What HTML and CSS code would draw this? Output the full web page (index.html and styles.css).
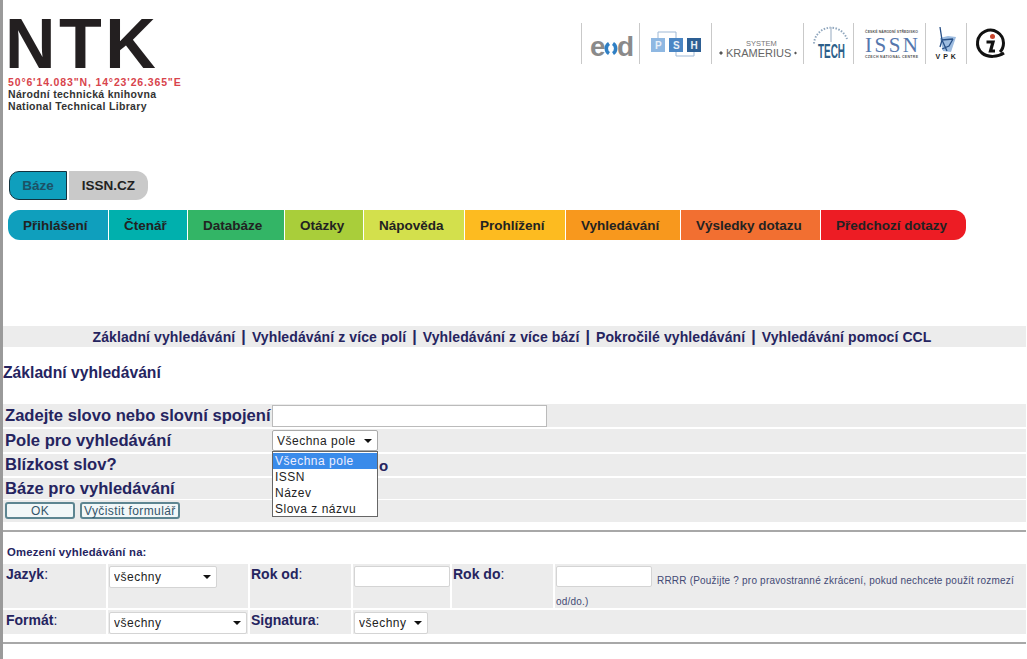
FILE: index.html
```html
<!DOCTYPE html>
<html lang="cs">
<head>
<meta charset="utf-8">
<title>Základní vyhledávání</title>
<link rel="stylesheet" href="styles.css">
</head>
<body>
<header class="top">
  <div class="brand">
    <div class="ntk">NTK</div>
    <div class="coords">50°6'14.083"N, 14°23'26.365"E</div>
    <div class="lib">Národní technická knihovna</div>
    <div class="lib">National Technical Library</div>
  </div>
  <div class="logos">
    <div class="logo w58">
      <svg width="44" height="28" viewBox="0 0 44 28"><text class="eod" x="1" y="26">e</text><path d="M20 23.500A6 6 0 0 1 20 13.500" fill="none" stroke="#2f7fc4" stroke-width="3.500"/><path d="M24 13.500A6 6 0 0 1 24 23.500" fill="none" stroke="#2f7fc4" stroke-width="3.500"/><text class="eod" x="28" y="26">d</text></svg>
    </div>
    <div class="logo w72">
      <svg width="50" height="26" viewBox="0 0 50 26"><path d="M7 7V1H25V7M25 21V25H43V21" fill="none" stroke="#9fb9d6"/><rect x="0" y="7" width="14" height="14" fill="#8fb8e2"/><rect x="18" y="7" width="14" height="14" fill="#4b86c4"/><rect x="36" y="7" width="14" height="14" fill="#2d5f94"/><text class="psh" x="4" y="18">P</text><text class="psh" x="22" y="18">S</text><text class="psh" x="39.500" y="18">H</text></svg>
    </div>
    <div class="logo w92">
      <svg width="80" height="28" viewBox="0 0 80 28"><text class="kr1" x="28" y="16">SYSTEM</text><text class="kr2" x="8" y="27">KRAMERIUS</text><path d="M1 23l2-2 2 2-2 2zM76 23l1.500-1.500 1.500 1.500-1.500 1.500z" fill="#555"/></svg>
    </div>
    <div class="logo w50">
      <svg width="36" height="38" viewBox="0 0 36 38"><path d="M3 18.500A17 17 0 0 1 36 14" fill="none" stroke="#8fa6bd" stroke-width="2" stroke-dasharray="1.500 1.500"/><path d="M20 2V17" stroke="#b8c6d4" stroke-width="1.500"/><text class="tech" x="7" y="32.500" textLength="27" lengthAdjust="spacingAndGlyphs">TECH</text></svg>
    </div>
    <div class="logo w72">
      <svg width="56" height="31" viewBox="0 0 56 31"><text class="tiny" x="3" y="5" textLength="53">ČESKÉ NÁRODNÍ STŘEDISKO</text><text class="issn" x="3" y="23.500">ISSN</text><text class="tiny" x="3" y="30" textLength="53">CZECH NATIONAL CENTRE</text></svg>
    </div>
    <div class="logo w41">
      <svg width="24" height="34" viewBox="0 0 24 34"><path d="M6 11L9 24 17 25 22 10 14 9Z" fill="#9dbce0"/><path d="M6 0L8 13 19 12M8 13L13 24M8 13L6 20M19 12L15 19 8 22" fill="none" stroke="#274f86" stroke-width="1.300"/><text class="vpk" x="1.500" y="31.500">VPK</text></svg>
    </div>
    <div class="logo w-last">
      <svg width="30" height="30" viewBox="0 0 30 30"><path d="M30 24C24 28 14 29 8 24A13 13 0 1 1 29.500 14C29.500 18 28 21 26 23" fill="none" stroke="#111" stroke-width="3"/><circle cx="18.500" cy="7.500" r="2.500" fill="#c8442c"/><path d="M12.500 13H19L16.500 22H21" fill="none" stroke="#111" stroke-width="3.200"/></svg>
    </div>
  </div>
</header>

<nav class="tabs">
  <a class="tab tab-on">Báze</a><a class="tab tab-off">ISSN.CZ</a>
</nav>

<nav class="menu">
  <a class="c1">Přihlášení</a>
  <a class="c2">Čtenář</a>
  <a class="c3">Databáze</a>
  <a class="c4">Otázky</a>
  <a class="c5">Nápověda</a>
  <a class="c6">Prohlížení</a>
  <a class="c7">Vyhledávání</a>
  <a class="c8">Výsledky dotazu</a>
  <a class="c9">Předchozí dotazy</a>
</nav>

<div class="sub">
  <a>Základní vyhledávání</a> <b>|</b> <a>Vyhledávání z více polí</a> <b>|</b> <a>Vyhledávání z více bází</a> <b>|</b> <a>Pokročilé vyhledávání</a> <b>|</b> <a>Vyhledávání pomocí CCL</a>
</div>

<h1 class="title">Základní vyhledávání</h1>

<form class="form">
  <div class="row row1"><label>Zadejte slovo nebo slovní spojení</label><input class="term" type="text"></div>
  <div class="row row2">
    <label>Pole pro vyhledávání</label>
    <span class="sel sel-field"><select><option>Všechna pole</option></select></span>
    <ul class="drop">
      <li class="hit">Všechna pole</li>
      <li>ISSN</li>
      <li>Název</li>
      <li>Slova z názvu</li>
    </ul>
  </div>
  <div class="row row3"><label>Blízkost slov?</label><span class="peek">o</span></div>
  <div class="row row4"><label>Báze pro vyhledávání</label></div>
  <div class="row row5"><button class="btn ok" type="button">OK</button><button class="btn" type="button">Vyčistit formulář</button></div>
</form>

<hr class="rule rule1">

<div class="limit-title">Omezení vyhledávání na:</div>
<div class="limits">
  <div class="cell tall first"><span class="lbl"><b>Jazyk</b>:</span></div>
  <div class="cell tall"><span class="sel sel-a"><select><option>všechny</option></select></span></div>
  <div class="cell tall"><span class="lbl"><b>Rok od</b>:</span></div>
  <div class="cell tall"><input class="year" type="text"></div>
  <div class="cell tall"><span class="lbl"><b>Rok do</b>:</span></div>
  <div class="cell tall note"><input class="year" type="text"><span class="hint">RRRR (Použijte ? pro pravostranné zkrácení, pokud nechcete použít rozmezí od/do.)</span></div>
  <div class="cell first"><span class="lbl"><b>Formát</b>:</span></div>
  <div class="cell"><span class="sel sel-b"><select><option>všechny</option></select></span></div>
  <div class="cell"><span class="lbl"><b>Signatura</b>:</span></div>
  <div class="cell rest"><span class="sel sel-c"><select><option>všechny</option></select></span></div>
</div>

<hr class="rule rule2">
</body>
</html>
```

FILE: styles.css
```css
* { box-sizing: border-box; }
html, body { height: 100%; }
body {
  margin: 0;
  padding-right: 1px;
  border-left: 3px solid #9a9a9a;
  background: #fff;
  color: #25245f;
  font-family: "Liberation Sans", Arial, sans-serif;
  overflow: hidden;
}

/* header */
.top { display: flex; justify-content: space-between; height: 171px; }
.brand { padding: 5px 0 0 5px; }
.ntk {
  height: 69px;
  padding-top: 9px;
  font-size: 70px;
  line-height: 60px;
  font-weight: 700;
  letter-spacing: 3.500px;
  color: #231f20;
  margin-left: -3px;
}
.coords { margin-top: 2px; font-size: 10.500px; line-height: 12px; font-weight: 700; letter-spacing: .85px; color: #d8444c; }
.lib { font-size: 10.500px; line-height: 12px; font-weight: 700; letter-spacing: .32px; color: #333; }
.logos { display: flex; align-items: stretch; height: 41px; margin-top: 23px; margin-right: 15px; }
.logo { display: flex; align-items: center; justify-content: center; border-left: 1px solid #c9c9c9; }
.logo svg { overflow: visible; }
.w58 { width: 58px; }
.w72 { width: 72px; }
.w92 { width: 92px; }
.w50 { width: 50px; }
.w41 { width: 41px; }
.w-last { width: 45px; }
.eod { font: 700 28px "Liberation Sans", sans-serif; fill: #8a8a8a; }
.psh { font: 700 10px "Liberation Sans", sans-serif; fill: #e8f0f8; }
.kr1 { font: 7.500px "Liberation Sans", sans-serif; fill: #777; }
.kr2 { font: 11px "Liberation Sans", sans-serif; fill: #666; }
.tech { font: 700 19.500px "Liberation Sans", sans-serif; fill: #2d5f8a; }
.tiny { font: 700 3.500px "Liberation Sans", sans-serif; fill: #555; }
.issn { font: 21px "Liberation Serif", serif; fill: #5577ad; letter-spacing: 2.500px; }
.vpk { font: 700 7px "Liberation Sans", sans-serif; fill: #222; letter-spacing: 3px; }

/* tabs */
.tabs { display: flex; height: 29px; margin-left: 6px; }
.tab { display: flex; align-items: center; justify-content: center; font-size: 13.500px; font-weight: 700; }
.tab-on { width: 58px; background: #0f9fbd; border: 1px solid #12323f; border-radius: 10px 0 0 10px; color: #1c5266; }
.tab-off { width: 79px; margin-left: 2px; background: #c9c9c9; border-radius: 0 12px 12px 0; color: #222; }

/* main menu */
.menu { display: flex; gap: 1px; height: 30px; margin: 10px 0 0 5px; width: 958px; }
.menu a { display: flex; align-items: center; padding-left: 15px; font-size: 13.500px; font-weight: 700; color: #222; }
.c1 { width: 100px; background: #0f9fbd; border-radius: 12px 0 0 12px; }
.c2 { width: 78px; background: #00b0ad; }
.c3 { width: 96px; background: #33b566; }
.c4 { width: 78px; background: #a9ce3a; }
.c5 { width: 100px; background: #d3e04c; }
.c6 { width: 100px; background: #fdbb20; }
.c7 { width: 114px; background: #f8981d; }
.c8 { width: 139px; background: #f26f31; }
.c9 { width: 145px; background: #ed1c24; border-radius: 0 12px 12px 0; }

/* sub menu */
.sub {
  display: flex; justify-content: center; align-items: center; gap: 6px;
  height: 21px; margin-top: 86px; padding-right: 5px;
  background: #ececec; font-size: 14px; font-weight: 700; letter-spacing: .1px;
}
.sub b { font-size: 16px; font-weight: 700; }

.title { margin: 17px 0 0; height: 40px; font-size: 15.700px; line-height: 17px; font-weight: 700; }

/* search form */
.form { display: flex; flex-direction: column; gap: 2px; }
.row { position: relative; display: flex; align-items: center; background: #ececec; padding-left: 2px; }
.row1 { height: 23px; }
.row2 { height: 23px; }
.row3 { height: 22px; }
.row4 { height: 21px; }
.row5 { height: 22px; gap: 5px; margin-top: -1px; }
.row label { width: 267px; font-size: 16.600px; font-weight: 700; white-space: nowrap; }
.term { width: 275px; height: 22px; margin: 0; border: 1px solid #bbb; background: #fff; }
.peek { position: absolute; left: 376px; font-size: 15px; font-weight: 700; }
.btn {
  height: 17px; padding: 0 2px; margin: 0 0 2px;
  border: 2px solid #5d8591; border-radius: 3px;
  background: #f2f7f8; color: #35556a;
  font: 12px "Liberation Sans", sans-serif; letter-spacing: .4px;
}
.ok { width: 70px; }

.sel { position: relative; display: inline-block; }
.sel select {
  appearance: none; -webkit-appearance: none;
  display: block; width: 100%; height: 100%; margin: 0; padding: 0 0 0 4px;
  border: 1px solid #d4d4d4; border-radius: 2px; background: #fff;
  color: #222; font: 12px "Liberation Sans", sans-serif; letter-spacing: .5px;
}
.sel::after {
  content: ""; position: absolute; right: 6px; top: 50%; margin-top: -2px;
  border: 4px solid transparent; border-top-color: #111; border-bottom-width: 0;
  pointer-events: none;
}
.sel-field { width: 106px; height: 21px; }
.sel-field select { border-color: #aaa; }
.sel-a { width: 108px; height: 22px; }
.sel-b { width: 138px; height: 22px; }
.sel-c { width: 74px; height: 22px; }

.drop {
  position: absolute; z-index: 2; left: 269px; top: 22px; width: 106px; height: 66px;
  margin: 0; padding: 1px 0 0; list-style: none;
  background: #fff; border: 1px solid #666;
  color: #222; font-size: 12px; line-height: 16px; letter-spacing: .5px;
}
.drop li { height: 16px; padding-left: 2px; }
.drop .hit { background: #3a8bea; color: #eef; }

.rule { display: block; margin: 0; border: 0; height: 2px; background: #a8a8a8; }
.rule1 { margin-top: 8px; }
.limit-title { margin: 14px 0 0 4px; height: 18px; font-size: 11.300px; line-height: 12px; font-weight: 700; letter-spacing: .2px; }

/* limits */
.limits {
  display: grid;
  grid-template-columns: 103px 140px 101px 97px 101px 1fr;
  grid-template-rows: 44px 24px;
  gap: 2px;
}
.cell { background: #ececec; padding: 2px 0 0 1px; }
.first { padding-left: 3px; }
.rest { grid-column: span 3; }
.lbl { display: block; padding-top: 1px; font-size: 14px; line-height: 15px; }
.year { width: 96px; height: 21px; margin: 0; border: 1px solid #d4d4d4; border-radius: 2px; background: #fff; vertical-align: 3px; }
.note { line-height: 19px; }
.hint { margin-left: 5px; font-size: 10px; color: #444a75; letter-spacing: .2px; }
.rule2 { margin-top: 8px; }
```
